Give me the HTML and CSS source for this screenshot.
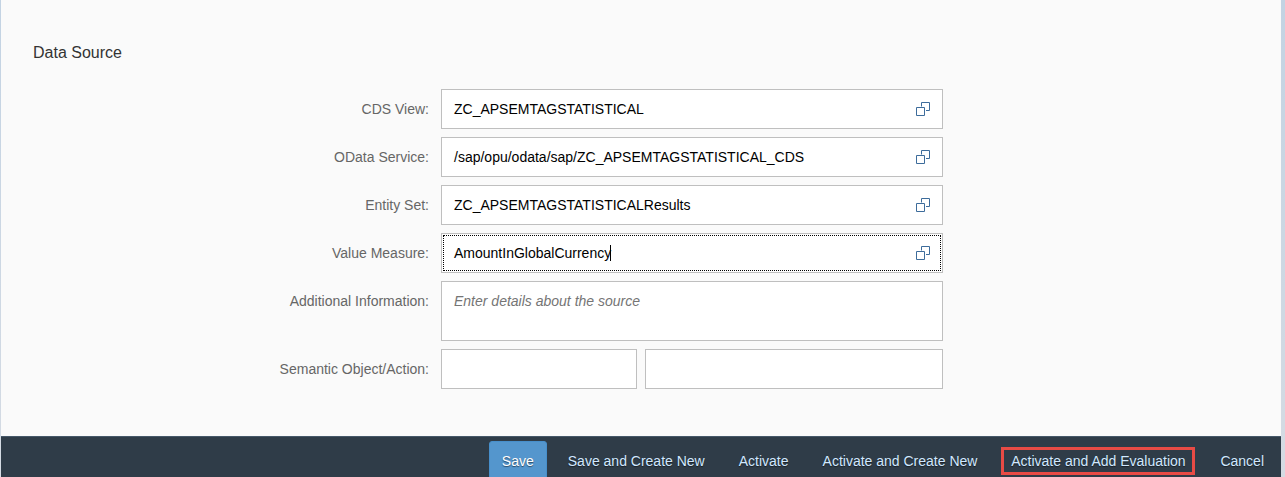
FILE: index.html
```
<!DOCTYPE html>
<html lang="en">
<head>
<meta charset="utf-8">
<title>Data Source</title>
<link rel="stylesheet" href="styles.css">
</head>
<body>
<svg class="defs" aria-hidden="true">
  <symbol id="value-help" viewBox="0 0 14 14">
    <path d="M5.5 4.5V.5H13.5V8.5H10" />
    <path d="M.5 5.5H8.5V13.5H.5Z" />
  </symbol>
</svg>
<div class="page">
  <div class="panel">
    <main class="content">
      <h2 class="title">Data Source</h2>
      <form class="form">
        <div class="row">
          <span class="label">CDS View:</span>
          <div class="field"><span class="value">ZC_APSEMTAGSTATISTICAL</span><svg class="icon"><use href="#value-help"/></svg></div>
        </div>
        <div class="row">
          <span class="label">OData Service:</span>
          <div class="field"><span class="value">/sap/opu/odata/sap/ZC_APSEMTAGSTATISTICAL_CDS</span><svg class="icon"><use href="#value-help"/></svg></div>
        </div>
        <div class="row">
          <span class="label">Entity Set:</span>
          <div class="field"><span class="value">ZC_APSEMTAGSTATISTICALResults</span><svg class="icon"><use href="#value-help"/></svg></div>
        </div>
        <div class="row">
          <span class="label">Value Measure:</span>
          <div class="field focused"><span class="value">AmountInGlobalCurrency</span><span class="caret"></span><svg class="icon"><use href="#value-help"/></svg></div>
        </div>
        <div class="row">
          <span class="label">Additional Information:</span>
          <div class="field area"><span class="placeholder">Enter details about the source</span></div>
        </div>
        <div class="row">
          <span class="label">Semantic Object/Action:</span>
          <div class="pair"><div class="field object"></div><div class="field action"></div></div>
        </div>
      </form>
    </main>
    <footer class="footer">
      <span class="btn primary">Save</span>
      <span class="btn">Save and Create New</span>
      <span class="btn">Activate</span>
      <span class="btn">Activate and Create New</span>
      <span class="btn marked">Activate and Add Evaluation</span>
      <span class="btn">Cancel</span>
    </footer>
  </div>
</div>
</body>
</html>
```
FILE: styles.css
```
* { box-sizing: border-box; }
body {
  margin: 0;
  height: 477px;
  overflow: hidden;
  font: 14px/20px "Liberation Sans", Arial, sans-serif;
}
.defs { display: none; }
.page {
  height: 477px;
  padding: 0 4px 0 1px;
  background: linear-gradient(#c3d3e3, #d5dbe3);
}
.panel {
  display: flex;
  flex-direction: column;
  height: 477px;
  background: #fafafa;
}
.content { flex: 1; padding-top: 42px; }
.title {
  margin: 0 0 0 32px;
  font-size: 16px;
  font-weight: 400;
  line-height: 22px;
  color: #333;
}
.form {
  display: flex;
  flex-direction: column;
  gap: 8px;
  margin-top: 25px;
}
.row {
  display: grid;
  grid-template-columns: 428px 502px;
  column-gap: 12px;
}
.label {
  text-align: right;
  line-height: 40px;
  color: #666;
}
.field {
  display: flex;
  align-items: center;
  height: 40px;
  padding: 0 12px;
  border: 1px solid #bfbfbf;
  background: #fff;
  color: #000;
}
.focused {
  outline: 1px dotted #000;
  outline-offset: -3px;
}
.caret { width: 1px; height: 16px; margin-left: -1px; background: #000; }
.icon {
  width: 14px;
  height: 14px;
  margin-left: auto;
  fill: none;
  stroke: #3d6c9b;
  stroke-width: 1;
}
.area { height: 60px; align-items: flex-start; padding-top: 9px; }
.placeholder { font-style: italic; color: #757575; }
.pair { display: grid; grid-template-columns: 196px 298px; gap: 8px; }
.footer {
  display: flex;
  justify-content: flex-end;
  gap: 8px;
  height: 41px;
  padding: 4px 4px 0 0;
  border-top: 1px solid #465869;
  background: #2f3c48;
}
.btn {
  height: 40px;
  padding: 0 13px;
  line-height: 40px;
  white-space: nowrap;
  color: #d1e8ff;
  text-shadow: 0 1px 1px #00000080;
}
.primary {
  border: 1px solid #478fcb;
  border-radius: 3px 3px 0 0;
  padding: 0 12px;
  line-height: 38px;
  background: #5496cd;
  color: #fff;
}
.marked {
  width: 194px;
  height: 28px;
  margin: 6px 4px 0 3px;
  padding: 0;
  border: 3px solid #e84b45;
  line-height: 22px;
  text-align: center;
}
```
